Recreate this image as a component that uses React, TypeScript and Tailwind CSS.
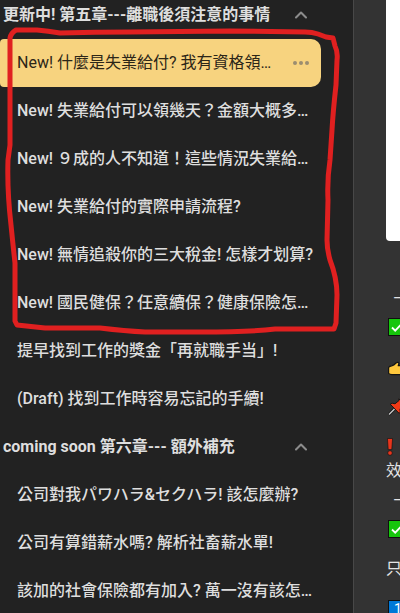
import { ChevronUp } from 'lucide-react'

type Section = { title: string; lessons: string[] }

const sections: Section[] = [
  {
    title: '更新中! 第五章---離職後須注意的事情',
    lessons: [
      'New! 什麼是失業給付? 我有資格領…',
      'New! 失業給付可以領幾天？金額大概多…',
      'New! ９成的人不知道！這些情況失業給…',
      'New! 失業給付的實際申請流程?',
      'New! 無情追殺你的三大稅金! 怎樣才划算?',
      'New! 國民健保？任意續保？健康保險怎…',
      '提早找到工作的獎金「再就職手当」!',
      '(Draft) 找到工作時容易忘記的手續!',
    ],
  },
  {
    title: 'coming soon 第六章--- 額外補充',
    lessons: [
      '公司對我パワハラ&セクハラ! 該怎麼辦?',
      '公司有算錯薪水嗎? 解析社畜薪水單!',
      '該加的社會保險都有加入? 萬一沒有該怎…',
    ],
  },
]

function LessonRow({ title, active }: { title: string; active: boolean }) {
  if (active) {
    return (
      <li className="mr-8 flex h-12 items-center justify-between rounded-l-sm rounded-r-[10px] bg-[#f7d37f] pr-3 pl-[17px] text-[#2c2618]">
        <a href="#lesson" className="whitespace-nowrap">{title}</a>
        <button type="button" aria-label="More" className="text-[#9b8d70]">
          <svg width="16" height="4" viewBox="0 0 16 4" fill="currentColor">
            <circle cx="2" cy="2" r="2" />
            <circle cx="8" cy="2" r="2" />
            <circle cx="14" cy="2" r="2" />
          </svg>
        </button>
      </li>
    )
  }
  return (
    <li className="flex h-12 items-center pl-[17px] font-medium">
      <a href="#lesson" className="whitespace-nowrap">{title}</a>
    </li>
  )
}

function Sidebar() {
  return (
    <nav className="relative w-[354px] shrink-0 overflow-hidden border-r border-[#484848] bg-[#222222] text-[#dedede]">
      <div className="-mt-[9px]">
        {sections.map((section, s) => (
          <section key={section.title}>
            <button type="button" className="flex h-12 w-full items-center justify-between pr-[42px] pl-[3px] font-bold">
              <span className="whitespace-nowrap">{section.title}</span>
              <ChevronUp size={20} strokeWidth={2.5} className="text-[#8c8c8c]" />
            </button>
            <ul>
              {section.lessons.map((title, i) => (
                <LessonRow key={title} title={title} active={s === 0 && i === 0} />
              ))}
            </ul>
          </section>
        ))}
      </div>
      <Marker />
    </nav>
  )
}

// hand drawn circle around the new lessons
function Marker() {
  return (
    <svg className="pointer-events-none absolute top-0 left-0" width="354" height="345" viewBox="0 0 354 345" fill="none" stroke="#e02020" strokeWidth="5" strokeLinejoin="round" strokeLinecap="round">
      <path d="M10 120 V38 Q11 33 16 30 H37 Q48 31 60 33 Q95 32 130 32 L230 31 L305 32 Q312 32 318 34 L326 37 L333 38 L335 46 Q338 52 337 60 L336 85 Q333 112 332 130 L330 160 Q327 180 328 200 L327 240 Q327 249 330 260 Q337 278 337 295 L336 323 L334 329 L275 329 Q250 332 200 332 H145 Q125 331 100 328 Q80 328 45 328 L17 325 L15 321 V263 Q13 245 11 225 Q7 190 8 160 L10 145 Z" />
    </svg>
  )
}

function CheckIcon() {
  return (
    <svg className="max-w-none shrink-0" width="18" height="18" viewBox="0 0 18 18">
      <rect x="0.5" y="0.5" width="17" height="17" fill="#16c60c" stroke="#101010" />
      <path d="M4 9.5 7.2 12.7 14 5.5" fill="none" stroke="#ffffff" strokeWidth="1.8" />
    </svg>
  )
}

function HandIcon() {
  return (
    <svg className="max-w-none shrink-0" width="20" height="18" viewBox="0 0 20 18">
      <path d="M.6 7.5Q1.6 6 3.6 5.8 6 5.2 8 3 10.4 1.6 10.9 3.6L10.2 5.6H18Q19.5 7 18 8.6H14Q15 13.6 12 14.6H4Q1.6 14.6.6 13.4Z" fill="#ffc83d" stroke="#151515" strokeWidth="1.2" strokeLinejoin="round" />
    </svg>
  )
}

function PinIcon() {
  return (
    <svg className="max-w-none shrink-0" width="20" height="18" viewBox="0 0 20 18">
      <path d="M.8 16.8 6 11.4" stroke="#151515" strokeWidth="3" />
      <path d="M1 16.6 7 10.4" stroke="#c8c8c8" strokeWidth="1.4" />
      <path d="M2.3 6.3 4.2 5.2 7 5.8 11 2.5 10.8.8 17 7 15.2 7 12 11 12.3 14 11.2 15.4Z" fill="#f03a17" stroke="#151515" strokeWidth="1" strokeLinejoin="round" />
    </svg>
  )
}

function AlertIcon() {
  return (
    <svg className="max-w-none shrink-0" width="6" height="18" viewBox="0 0 6 18">
      <path d="M.4.5H5.6L4.8 11.6H1.2Z" fill="#e8351c" stroke="#151515" strokeWidth="0.7" />
      <circle cx="3" cy="15" r="2.3" fill="#e8351c" stroke="#151515" strokeWidth="0.7" />
    </svg>
  )
}

function Content() {
  return (
    <main className="min-w-0 flex-1 overflow-hidden bg-[#333333] pl-8 text-[#e4e4e4]">
      <div className="mb-[46px] h-[241px] w-full rounded-bl bg-white" />
      <div className="flex flex-col whitespace-nowrap *:flex *:h-6 *:shrink-0 *:items-center">
        <p className="pl-[7px]">—</p>
        <p className="mt-1 pl-0.5"><CheckIcon /></p>
        <p className="mt-[18px] pl-0.5"><HandIcon /></p>
        <p className="mt-[14px] pl-0.5"><PinIcon /></p>
        <p className="mt-4 pl-px"><AlertIcon /></p>
        <p>效</p>
        <p className="mt-[6px] pl-[7px]">—</p>
        <p className="mt-1 pl-0.5"><CheckIcon /></p>
        <p className="mt-4">只</p>
        <p className="mt-4 pl-0.5">
          <span className="h-[18px] w-[18px] shrink-0 border border-[#101010] bg-[#0078d7] pl-[5px] text-sm leading-4 text-white">1</span>
        </p>
      </div>
    </main>
  )
}

export default function App() {
  return (
    <div className="flex h-screen overflow-hidden bg-[#333333] font-[Roboto,'Noto_Sans_CJK_TC',sans-serif] text-base">
      <Sidebar />
      <Content />
    </div>
  )
}
